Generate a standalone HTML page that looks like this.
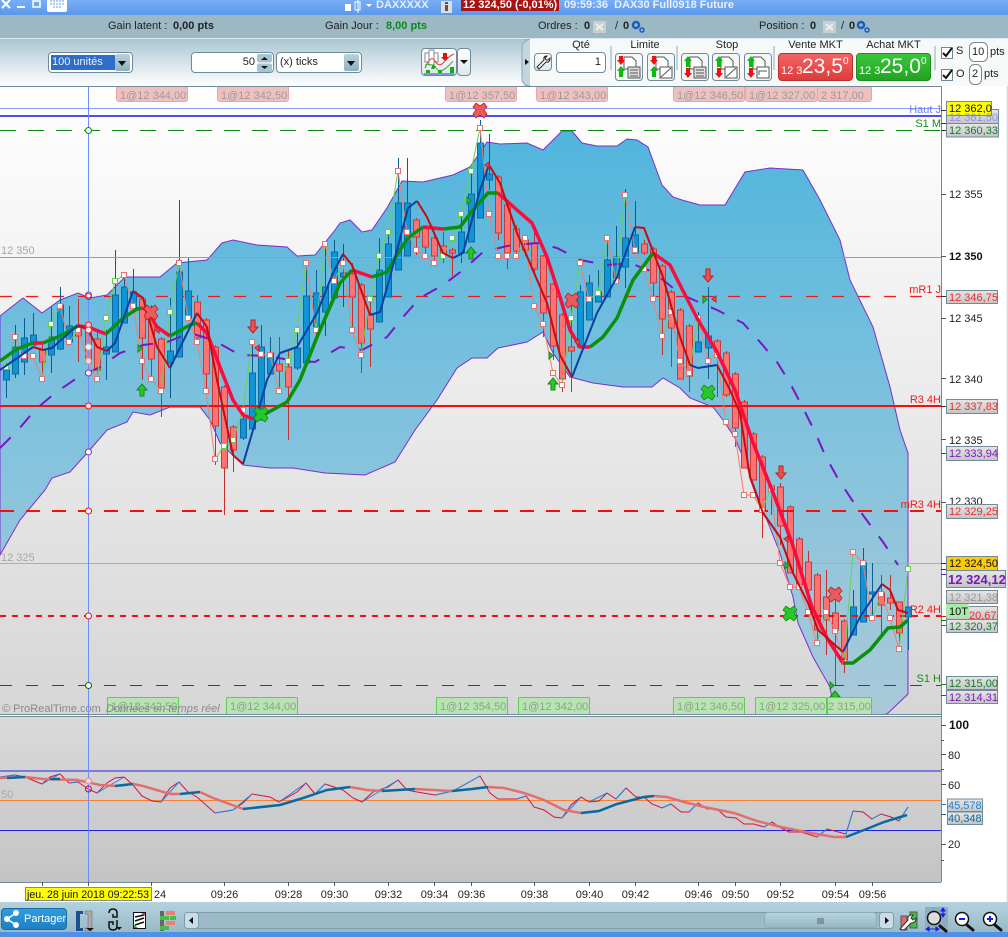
<!DOCTYPE html>
<html><head><meta charset="utf-8"><style>
html,body{margin:0;padding:0;background:#fff}
#p{position:relative;width:1008px;height:937px;overflow:hidden;font-family:"Liberation Sans",sans-serif;font-size:11px;color:#222}
.a{position:absolute;white-space:nowrap}
.sel{position:absolute;background:#fff;border:1px solid #6f8b9b;border-radius:4px;box-sizing:border-box}
.ar{position:absolute;top:1px;bottom:1px;width:15px;background:linear-gradient(#b9d2dc,#8fb0bf);border-radius:2px}
.ar:after{content:"";position:absolute;left:3px;top:7px;border:4px solid transparent;border-top:5px solid #111;border-bottom:0}
.btn{position:absolute;box-sizing:border-box;border:1px solid #6f8b9b;border-radius:4px;background:linear-gradient(#fff,#dfe7ea)}
.red,.grn{position:absolute;top:53px;height:28px;width:75px;border-radius:4px;box-sizing:border-box;color:#fff}
.red{left:778px;background:linear-gradient(#f26464,#dd3c3c);border:1px solid #b83232}
.grn{left:856px;background:linear-gradient(#3cc43c,#22a522);border:1px solid #1e8c1e}
.s{position:absolute;bottom:3px;font-size:11px}.b{position:absolute;top:0;font-size:21px;line-height:25px}.u{position:absolute;top:2px;font-size:10px}
svg text{font-family:"Liberation Sans",sans-serif}
</style></head><body><div id="p">
<!-- top bars -->
<div class="a" style="left:0;top:0;width:1008px;height:15px;background:linear-gradient(#77aef5,#5b97ea)"></div>
<div class="a" style="left:0;top:15px;width:1008px;height:23px;background:#9bb8c4"></div>
<div class="a" style="left:0;top:38px;width:1008px;height:1px;background:#dbe8ed"></div>
<div class="a" style="left:0;top:39px;width:1008px;height:47px;background:linear-gradient(#a9c5d1,#c4d8e0 30%,#fff)"></div>
<div class="a" style="left:525px;top:39px;width:483px;height:47px;background:#f7f9f9"></div>
<svg class="a" style="left:0;top:0" width="1008" height="86">
<g stroke="#fff" fill="none"><path d="M2 0L10 8M10 0L2 8" stroke-width="2"/><path d="M17 7h8" stroke-width="2"/><rect x="33" y="1" width="7" height="6" stroke-width="1.5"/></g>
<rect x="47" y="-4" width="20" height="16" rx="2" fill="#fff"/><path d="M50 1h14M50 4h14M53 7h9" stroke="#5b97ea" stroke-dasharray="2 1"/>
<path d="M349 5v6M358 0v13" stroke="#fff"/><rect x="345" y="4" width="6" height="7" fill="#fff"/><rect x="355" y="2" width="5" height="8" fill="none" stroke="#fff"/><path d="M366 4h6l-3 3z" fill="#fff"/>
<rect x="441" y="1" width="11" height="12" fill="#ddd"/><rect x="445" y="5" width="3" height="6" fill="#555"/><rect x="445" y="2" width="3" height="2" fill="#555"/>
<rect x="461" y="0" width="98" height="11" fill="#a81212"/>
<path d="M522 39q8 3 8 8v32q0 6 -8 7h8v-47z" fill="#9bb8c4"/><path d="M530 39q-8 3 -8 8v32q0 6 8 7" fill="#c2d6de" stroke="#8fa8b5"/><path d="M525 59l4 3l-4 3z" fill="#111"/>
<rect x="593" y="21" width="13" height="12" fill="#c9cfd1"/><rect x="824" y="21" width="13" height="12" fill="#c9cfd1" transform="translate(-1 0)"/><path d="M596 24l7 6M603 24l-7 6M826 24l7 6M833 24l-7 6" stroke="#eee" stroke-width="2"/>
<g fill="none" stroke="#1a5fc0" stroke-width="2.5"><circle cx="636" cy="25" r="3"/><circle cx="642" cy="30" r="2" stroke-width="1.5"/><circle cx="861" cy="25" r="3"/><circle cx="867" cy="30" r="2" stroke-width="1.5"/></g>
<path d="M611 46v24M677 46v24M774 46v24M935 46v24" stroke="#8fa8b5"/>
</svg>
<div class="a" style="left:463px;top:-1px;color:#fff;font-weight:bold">12 324,50 (-0,01%)</div>
<div class="a" style="left:376px;top:-1px;color:#e4edfb;font-weight:bold">DAXXXXX</div>
<div class="a" style="left:564px;top:-1px;color:#e8f0fc;font-weight:bold">09:59:36&nbsp; DAX30 Full0918 Future</div>
<div class="a" style="left:108px;top:20px">Gain latent :</div><div class="a" style="left:173px;top:20px;font-weight:bold">0,00 pts</div>
<div class="a" style="left:325px;top:20px">Gain Jour :</div><div class="a" style="left:386px;top:20px;font-weight:bold;color:#0b8a1c">8,00 pts</div>
<div class="a" style="left:538px;top:20px">Ordres :</div><div class="a" style="left:584px;top:20px;font-weight:bold">0</div><div class="a" style="left:615px;top:20px">/</div><div class="a" style="left:623px;top:20px;font-weight:bold">0</div>
<div class="a" style="left:759px;top:20px">Position :</div><div class="a" style="left:810px;top:20px;font-weight:bold">0</div><div class="a" style="left:841px;top:20px">/</div><div class="a" style="left:849px;top:20px;font-weight:bold">0</div>
<!-- toolbar -->
<div class="sel" style="left:48px;top:52px;width:85px;height:21px"><div class="a" style="left:2px;top:2px;height:15px;background:#2f6ec6;color:#e8f0ff;padding-left:1px;line-height:15px;width:63px">100 unités</div><div class="ar" style="right:2px"></div></div>
<div class="sel" style="left:191px;top:52px;width:83px;height:21px"><div class="a" style="right:18px;top:3px">50</div><svg class="a" style="left:65px;top:1px" width="16" height="18"><rect width="15" height="8.5" fill="#a8c4d0" rx="2"/><rect y="9.5" width="15" height="8.5" fill="#a8c4d0" rx="2"/><path d="M4 6l3.500-3l3.500 3zM4 12l3.500 3l3.500-3z" fill="#111"/></svg></div>
<div class="sel" style="left:276px;top:52px;width:86px;height:21px"><div class="a" style="left:3px;top:3px">(x) ticks</div><div class="ar" style="right:2px"></div></div>
<div class="btn" style="left:421px;top:48px;width:36px;height:28px"><svg width="34" height="26"><rect x="3" y="4" width="13" height="9" fill="#fff" stroke="#888"/><rect x="7" y="1" width="5" height="15" fill="#fff" stroke="#888"/><path d="M3 19q6-14 10-7t9 1t10-8" stroke="#e04040" fill="none"/><path d="M3 16q8-2 12 4t16-8" stroke="#3cb43c" fill="none"/><path d="M21 4h4v4h2l-4 4l-4-4h2z" fill="#e01010"/><path d="M12 20h-3l2-5l3 3z" fill="#18a818"/><path d="M4 21h4v3h-4zM16 21h4v3h-4zM28 18h4v6h-4z" fill="#10b010"/><path d="M2 25h30" stroke="#2040e0"/></svg></div>
<div class="btn" style="left:457px;top:48px;width:14px;height:28px"><svg width="12" height="26"><path d="M2 11h8l-4 4z" fill="#111"/></svg></div>
<div class="btn" style="left:534px;top:53px;width:18px;height:18px"><svg width="16" height="16"><path d="M2 13l7-7q-1-4 3-4l-2 2l1 2l2 0l2-2q0 5-4 4l-7 7z" fill="#fff" stroke="#222"/></svg></div>
<div class="sel" style="left:556px;top:52px;width:50px;height:21px;text-align:right"><div style="padding:3px 4px 0 0">1</div></div>
<div class="a" style="left:556px;top:39px;width:50px;text-align:center">Qté</div><div class="a" style="left:615px;top:39px;width:60px;text-align:center">Limite</div><div class="a" style="left:697px;top:39px;width:60px;text-align:center">Stop</div><div class="a" style="left:778px;top:39px;width:75px;text-align:center">Vente MKT</div><div class="a" style="left:856px;top:39px;width:75px;text-align:center">Achat MKT</div>
<svg class="a" style="left:0;top:0" width="1008" height="90">
<g fill="#f3f6f7" stroke="#6f8b9b"><rect x="615.500" y="53.500" width="27" height="27" rx="3"/><rect x="647.500" y="53.500" width="27" height="27" rx="3"/><rect x="681.500" y="53.500" width="27" height="27" rx="3"/><rect x="712.500" y="53.500" width="27" height="27" rx="3"/><rect x="744.500" y="53.500" width="27" height="27" rx="3"/></g>
<g fill="#fff" stroke="#555"><path d="M624 57h8l4 4v8h-12zM656 57h8l4 4v8h-12zM690 57h8l4 4v8h-12zM721 57h8l4 4v8h-12zM753 57h8l4 4v8h-12z"/><rect x="628" y="67" width="12" height="11" fill="#ddd"/><rect x="660" y="67" width="12" height="11"/><rect x="694" y="67" width="12" height="11" fill="#ddd"/><rect x="725" y="67" width="12" height="11"/><rect x="757" y="67" width="12" height="11"/></g>
<path d="M630 70h8M630 73h8M630 76h8M696 70h8M696 73h8M696 76h8" stroke="#555"/><path d="M661 77l10-9M726 77l10-9" stroke="#555"/><path d="M759 75v-4h8" stroke="#555" fill="none"/>
<g fill="#ee1111"><path d="M619 56h4v4h2l-4 5l-4-5h2zM652 56h4v4h2l-4 5l-4-5h2zM686 68h4v5h2l-4 5l-4-5h2zM717 68h4v5h2l-4 5l-4-5h2zM749 68h4v5h2l-4 5l-4-5h2z"/></g>
<g fill="#0fb80f"><path d="M621 66l4 5h-2v6h-4v-6h-2zM654 66l4 5h-2v6h-4v-6h-2zM688 56l4 5h-2v6h-4v-6h-2zM719 56l4 5h-2v6h-4v-6h-2zM751 56l4 5h-2v6h-4v-6h-2z"/></g>
<g fill="#fff" stroke="#6f8b9b"><rect x="941.500" y="47.500" width="11" height="11"/><rect x="941.500" y="69.500" width="11" height="11"/><rect x="969.500" y="42.500" width="18" height="19" rx="5"/><rect x="969.500" y="64.500" width="12" height="20" rx="5"/></g>
<path d="M943 53l3 3l6-8M943 75l3 3l6-8" stroke="#111" stroke-width="2" fill="none"/>
</svg>
<div class="red"><span class="s" style="left:2px">12 3</span><span class="b" style="left:23px">23,5</span><span class="u" style="left:64px">0</span></div>
<div class="grn"><span class="s" style="left:2px">12 3</span><span class="b" style="left:23px">25,0</span><span class="u" style="left:64px">0</span></div>
<div class="a" style="left:956px;top:45px">S</div><div class="a" style="left:972px;top:46px">10</div><div class="a" style="left:990px;top:46px">pts</div>
<div class="a" style="left:956px;top:68px">O</div><div class="a" style="left:972px;top:68px">2</div><div class="a" style="left:984px;top:68px">pts</div>

<!-- chart -->
<svg class="a" style="left:0;top:86px" width="1008" height="816" viewBox="0 86 1008 816">
<defs>
<linearGradient id="bg" x1="0" y1="0" x2="0" y2="1"><stop offset="0" stop-color="#fff"/><stop offset="1" stop-color="#d6d6d6"/></linearGradient>
<linearGradient id="cl" gradientUnits="userSpaceOnUse" x1="0" y1="130" x2="0" y2="714"><stop offset="0" stop-color="#50b5dc"/><stop offset=".5" stop-color="#80c2de"/><stop offset="1" stop-color="#aac9d8"/></linearGradient>
<linearGradient id="rs" x1="0" y1="0" x2="0" y2="1"><stop offset="0" stop-color="#dadada"/><stop offset="1" stop-color="#c4c4c4"/></linearGradient>
<linearGradient id="tg" x1="0" y1="0" x2="0" y2="1"><stop offset="0" stop-color="#e6e6e6"/><stop offset="1" stop-color="#c4c4c4"/></linearGradient>
<clipPath id="cc"><rect x="0" y="86" width="941" height="628"/></clipPath>
<marker id="mg" markerWidth="6" markerHeight="6" refX="3" refY="3" markerUnits="userSpaceOnUse"><rect x=".5" y=".5" width="5" height="5" fill="#fff" stroke="#5cd04c"/></marker>
<marker id="mr" markerWidth="6" markerHeight="6" refX="3" refY="3" markerUnits="userSpaceOnUse"><rect x=".5" y=".5" width="5" height="5" fill="#fff" stroke="#e87070"/></marker>
</defs>
<rect x="0" y="86" width="941" height="628" fill="url(#bg)"/>
<rect x="941" y="86" width="67" height="816" fill="#fff"/>
<rect x="0" y="717" width="941" height="165" fill="url(#rs)"/>
<rect x="1006.500" y="86" width="1.500" height="816" fill="#d6dcdf"/>
<g clip-path="url(#cc)">
<polygon fill="url(#cl)" stroke="#7a2fc8" stroke-width="1" points="0,316 23,298 42,313 60,300 78,293 90,298 107,295 125,277 160,277 177,263 207,260 222,243 233,240 257,245 287,247 297,256 315,255 335,230 340,223 350,220 362,232 372,230 387,208 402,181 423,182 453,175 470,167 487,142 500,144 527,143 543,150 562,131 572,131 582,143 597,146 617,146 627,139 637,140 648,147 662,185 673,197 682,200 700,205 725,205 745,172 770,168 803,170 820,200 840,240 850,280 873,327 890,387 900,430 908,453 908,694 887,714 836,722 830,687 813,657 798,623 793,597 780,553 763,510 747,467 735,438 723,420 713,407 690,398 680,388 663,378 652,387 623,387 593,383 570,377 553,353 543,332 527,342 498,348 487,358 472,358 457,368 437,400 415,430 395,462 365,475 325,473 293,468 270,468 243,465 220,443 210,420 200,407 170,407 150,415 133,412 127,422 107,430 88,452 70,472 52,478 45,490 20,520 0,555"/>
<!-- horizontals -->
<g fill="none">
<path d="M0 108.500H941" stroke="#8c9cff"/>
<path d="M0 116H941" stroke="#5050e8" stroke-width="2"/>
<path d="M0 130.500H941" stroke="#0a8a0a" stroke-dasharray="16 12"/>
<path d="M0 296.500H941" stroke="#f01818" stroke-width="1.300" stroke-dasharray="12 14"/>
<path d="M0 563.500H941" stroke="#e89a70"/>
<path d="M0 685.500H941" stroke="#0a6a0a" stroke-dasharray="12 14"/>
<!-- wicks -->
<path stroke="#0b5c90" d="M6.500 363V398M15.500 325V378M24.500 318V375M33.500 313V345M51.500 307V373M60.500 287V350M69.500 306V343M106.500 330V380M115.500 250V352M124.500 273V323M133.500 269V307M170.500 298V398M179.500 200V357M188.500 258V320M243.500 410V440M252.500 340V429M261.500 325V420M270.500 337V374M297.500 330V370M306.500 263V363M316.500 270V340M325.500 243V336M334.500 240V300M343.500 244V307M379.500 238V322M388.500 232V297M398.500 158V270M407.500 158V256M461.500 214V263M471.500 171V242M480.500 120V218M489.500 134V190M580.500 285V347M589.500 275V320M598.500 270V302M607.500 238V297M616.500 226V279M625.500 189V288M635.500 201V253M698.500 312V352M708.500 287V379M853.500 590V635M863.500 548V622M872.500 563V617M908.500 608V650"/>
<path stroke="#c33030" d="M42.500 343V380M78.500 299V362M88.500 320V370M97.500 330V377M142.500 297V380M151.500 305V377M161.500 337V417M197.500 295V345M206.500 318V393M215.500 345V465M224.500 385V515M233.500 425V472M279.500 337V392M288.500 350V440M352.500 263V330M361.500 283V373M370.500 300V367M416.500 218V255M425.500 227V256M434.500 235V263M443.500 232V263M452.500 248V276M498.500 175V240M507.500 203V269M516.500 225V253M525.500 235V256M534.500 227V275M543.500 255V337M553.500 283V360M562.500 313V392M571.500 306V392M644.500 240V255M653.500 247V300M662.500 264V355M671.500 290V367M680.500 308V379M689.500 324V392M717.500 339V397M726.500 351V397M735.500 372V447M744.500 400V468M753.500 432V480M762.500 455V538M771.500 484V515M780.500 483V545M790.500 505V573M799.500 537V585M808.500 551V600M817.500 573V645M826.500 570V655M835.500 600V685M844.500 619V673M881.500 575V637M890.500 575V610M899.500 602V650"/>
<!-- bodies -->
<path fill="#0f95d6" stroke="#0b6aa0" d="M3.500 370h6v10h-6zM12.500 347h6v27h-6zM21.500 338h6v24h-6zM30.500 335h6v10h-6zM48.500 337h6v18h-6zM57.500 305h6v44h-6zM66.500 326h6v16h-6zM103.500 347h6v7h-6zM112.500 295h6v57h-6zM121.500 287h6v36h-6zM130.500 292h6v15h-6zM167.500 351h6v12h-6zM176.500 272h6v85h-6zM185.500 291h6v27h-6zM240.500 419h6v19h-6zM249.500 373h6v56h-6zM258.500 347h6v73h-6zM267.500 353h6v21h-6zM294.500 348h6v20h-6zM303.500 296h6v67h-6zM313.500 293h6v37h-6zM322.500 287h6v25h-6zM331.500 252h6v46h-6zM340.500 273h6v4h-6zM376.500 270h6v52h-6zM385.500 244h6v53h-6zM395.500 203h6v67h-6zM404.500 203h6v53h-6zM458.500 232h6v21h-6zM468.500 194h6v48h-6zM477.500 143h6v75h-6zM486.500 174h6v6h-6zM577.500 292h6v55h-6zM586.500 283h6v37h-6zM595.500 292h6v10h-6zM604.500 260h6v37h-6zM613.500 257h6v22h-6zM622.500 238h6v29h-6zM632.500 235h6v18h-6zM695.500 342h6v10h-6zM705.500 336h6v12h-6zM850.500 607h6v28h-6zM860.500 563h6v59h-6zM869.500 592h6v2h-6zM905.500 607h6v10h-6z"/>
<path fill="#ff7272" stroke="#c83a3a" d="M39.500 350h6v12h-6zM75.500 328h6v8h-6zM85.500 330h6v33h-6zM94.500 339h6v31h-6zM139.500 299h6v39h-6zM148.500 312h6v47h-6zM158.500 339h6v49h-6zM194.500 302h6v36h-6zM203.500 320h6v54h-6zM212.500 347h6v79h-6zM221.500 387h6v81h-6zM230.500 427h6v23h-6zM276.500 364h6v7h-6zM285.500 367h6v20h-6zM349.500 274h6v23h-6zM358.500 285h6v58h-6zM367.500 315h6v14h-6zM413.500 220h6v17h-6zM422.500 228h6v19h-6zM431.500 238h6v18h-6zM440.500 246h6v8h-6zM449.500 250h6v3h-6zM495.500 177h6v56h-6zM504.500 205h6v48h-6zM513.500 229h6v22h-6zM522.500 240h6v10h-6zM531.500 243h6v26h-6zM540.500 256h6v57h-6zM550.500 284h6v62h-6zM559.500 315h6v64h-6zM568.500 347h6v4h-6zM641.500 244h6v9h-6zM650.500 249h6v34h-6zM659.500 266h6v53h-6zM668.500 292h6v36h-6zM677.500 310h6v69h-6zM686.500 326h6v50h-6zM714.500 341h6v15h-6zM723.500 353h6v42h-6zM732.500 374h6v54h-6zM741.500 402h6v66h-6zM750.500 434h6v46h-6zM759.500 457h6v54h-6zM768.500 486h6v4h-6zM777.500 487h6v39h-6zM787.500 507h6v66h-6zM796.500 539h6v46h-6zM805.500 562h6v28h-6zM814.500 575h6v55h-6zM823.500 597h6v23h-6zM832.500 613h6v17h-6zM841.500 621h6v39h-6zM878.500 593h6v12h-6zM887.500 598h6v5h-6zM896.500 602h6v31h-6z"/>
<path d="M0 257.500H941" stroke="#ff7f30"/>
<path d="M0 406H941" stroke="#f40f0f" stroke-width="2"/>
<path d="M0 511H941" stroke="#f01010" stroke-width="2" stroke-dasharray="14 12"/>
<path d="M0 616H941" stroke="#f01010" stroke-width="2" stroke-dasharray="6 6"/>
<!-- long MA -->
<polyline stroke="#7a18c0" stroke-width="2" stroke-dasharray="15 14" points="0,448 18,430 35,410 55,393 77,378 100,367 120,353 143,345 167,342 190,333 213,340 240,355 267,356 290,360 315,362 340,347 362,350 387,337 403,317 420,298 443,285 463,270 483,252 507,246 537,243 557,248 580,260 607,265 630,263 653,272 673,288 687,297 717,310 743,323 760,342 777,362 790,383 803,408 815,432 825,455 837,477 852,500 868,522 883,542 898,565"/>
<!-- close lines -->
<g stroke-width="1" style="marker:url(#mg)" stroke="#66d258">
<polyline points="6,367 15,337"/><polyline points="42,379 51,324 60,306"/><polyline points="69,342 78,330"/><polyline points="97,379 106,318 115,281 124,275"/><polyline points="161,391 170,312 179,263"/><polyline points="215,459 224,446 233,440 243,410 252,342"/><polyline points="279,391 288,361 297,330 306,263"/><polyline points="316,330 325,244"/><polyline points="334,281 343,263"/><polyline points="361,355 370,299 379,256 388,232 398,171"/><polyline points="434,263 443,256 452,238 461,214 471,171 480,128"/><polyline points="516,256 525,238"/><polyline points="562,385 571,318 580,263"/><polyline points="589,299 598,293 607,238"/><polyline points="616,281 625,195"/><polyline points="662,336 671,312"/><polyline points="689,373 698,318"/><polyline points="708,361 717,355"/><polyline points="762,510 771,489"/><polyline points="817,643 826,612"/><polyline points="844,662 853,552"/><polyline points="872,618 881,594"/><polyline points="899,649 908,569"/>
</g>
<g stroke-width="1" style="marker:url(#mr)" stroke="#ec8070">
<polyline points="15,337 24,356 33,356 42,379"/><polyline points="60,306 69,342"/><polyline points="78,330 88,361 97,379"/><polyline points="124,275 133,306 142,361 151,379 161,391"/><polyline points="179,263 188,318 197,342 206,391 215,459"/><polyline points="252,342 261,354 270,355 279,391"/><polyline points="306,263 316,330"/><polyline points="325,244 334,281"/><polyline points="343,263 352,330 361,355"/><polyline points="398,171 407,232 416,250 425,256 434,263"/><polyline points="480,128 489,214 498,256 507,256 516,256"/><polyline points="525,238 534,306 543,324 553,373 562,385"/><polyline points="580,263 589,299"/><polyline points="607,238 616,281"/><polyline points="625,195 635,250 644,269 653,299 662,336"/><polyline points="671,312 680,361 689,373"/><polyline points="698,318 708,361"/><polyline points="717,355 726,422 735,434 744,495 753,495 762,510"/><polyline points="771,489 780,563 790,587 799,587 808,612 817,643"/><polyline points="826,612 835,631 844,662"/><polyline points="853,552 863,563 872,618"/><polyline points="881,594 890,618 899,649"/>
</g>
<!-- thick EMA -->
<g stroke-width="3.500" stroke-linejoin="round">
<path stroke="#ff0a3c" d="M33 343L43 343M78 326L88 327L106 334M142 308L147 310L157 327L170 336M197 323L207 333L220 367L233 400L243 415L253 419M352 270L372 277M423 227L443 229M498 193L517 210L532 223L547 257L560 297L570 330L580 347L590 347M653 253L670 265L680 285L697 318L717 352L735 390L752 440L772 490L792 543L812 607L827 638L843 663"/>
<path stroke="#0a900a" d="M0 361L17 349L33 343M43 343L60 336L78 326M106 334L123 318L137 309L142 308M170 336L190 325L197 323M253 419L267 413L287 402L300 380L317 337L333 300L340 283L352 270M372 277L387 272L398 253L408 238L423 227M443 229L460 227L473 210L488 193L498 193M590 347L603 337L617 318L633 280L653 253M843 663L853 663L870 650L888 628L900 627L908 620"/>
</g>
<!-- short MA -->
<g stroke-width="2" stroke-linejoin="round">
<path stroke="#0a40a0" d="M0 370L33 347M43 350L52 348L78 325M107 351L115 343L133 291M170 368L197 313M243 464L253 430L267 380L280 353L297 347L317 313L333 273L343 254M370 315L380 312L390 277L408 208L417 201M453 258L463 253L480 190L489 165M572 377L597 313L617 277L635 227M690 365L698 368L717 365M843 652L860 617L882 584"/>
<path stroke="#c40d10" d="M33 347L43 350M78 325L88 330L97 347L107 351M133 291L143 298L157 347L170 368M197 313L207 327L217 380L233 455L243 464M343 254L352 265L370 315M417 201L427 217L443 253L453 258M489 165L500 183L517 233L547 303L560 355L572 377M635 227L644 228L663 277L680 337L690 365M717 365L730 390L740 413L750 477L763 513L780 537L793 573L808 603L818 630L843 652M882 584L890 590L898 610L908 613"/>
</g>
</g>
</g>
<!-- arrows / signals -->
<g fill="#28c828" stroke="#128a12"><path d="M142 384l5 6h-3v6h-4v-6h-3zM471 247l5 6h-3v6h-4v-6h-3zM553 378l5 6h-3v6h-4v-6h-3zM835 691l5 6h-3v2h-4v-2h-3z"/>
<path d="M138 345l4 3.500l-4 3.500zM467 197l4 3.500l-4 3.500zM549 352l4 3.500l-4 3.500zM703 296l4 3.500l-4 3.500zM785 562l4 3.500l-4 3.500zM830 682l4 3.500l-4 3.500z"/>
<path d="M254 411l3-4l4 3l4-3l3 4l-3 3l3 4l-3 4l-4-3l-4 3l-3-4l3-4zM701 389l3-4l4 3l4-3l3 4l-3 3l3 4l-3 4l-4-3l-4 3l-3-4l3-4zM783 610l3-4l4 3l4-3l3 4l-3 3l3 4l-3 4l-4-3l-4 3l-3-4l3-4z" stroke-width=".8"/></g>
<g fill="#f05050" stroke="#c02020"><path d="M251 320h4v7h3l-5 6l-5-6h3zM706 269h4v7h3l-5 6l-5-6h3zM779 466h4v7h3l-5 6l-5-6h3z"/>
<path d="M159 327l-4 3l4 3zM259 345l-4 3l4 3zM489 162l-4 3l4 3zM579 339l-4 3l4 3zM716 296l-4 3l4 3zM788 536l-4 3l4 3zM844 658l-4 3l4 3z"/>
<path d="M144 309l3-4l4 3l4-3l3 4l-3 3l3 4l-3 4l-4-3l-4 3l-3-4l3-4zM565 297l3-4l4 3l4-3l3 4l-3 3l3 4l-3 4l-4-3l-4 3l-3-4l3-4zM828 591l3-4l4 3l4-3l3 4l-3 3l3 4l-3 4l-4-3l-4 3l-3-4l3-4zM473 107l3-4l4 3l4-3l3 4l-3 3l3 4l-3 4l-4-3l-4 3l-3-4l3-4z" stroke-width=".8" fill="#e85c5c"/></g>
<!-- order pills -->
<g font-size="11"><g fill="#f0c0c0" stroke="#eaa6a6"><rect x="116.500" y="84.500" width="71" height="17" rx="2.500"/><rect x="217.500" y="84.500" width="71" height="17" rx="2.500"/><rect x="445.500" y="84.500" width="71" height="17" rx="2.500"/><rect x="536.500" y="84.500" width="71" height="17" rx="2.500"/><rect x="673.500" y="84.500" width="71" height="17" rx="2.500"/><rect x="817.500" y="84.500" width="54" height="17" rx="2.500"/><rect x="745.500" y="84.500" width="72" height="17" rx="2.500"/></g>
<g fill="#9a9a9a"><text x="120" y="99">1@12 344,00</text><text x="221" y="99">1@12 342,50</text><text x="449" y="99">1@12 357,50</text><text x="540" y="99">1@12 343,00</text><text x="677" y="99">1@12 346,50</text><text x="749" y="99">1@12 327,00</text><text x="821" y="99">2 317,00</text></g>
<g fill="#b8e4b4" stroke="#58d050"><path d="M107.500 714.500v-16q0-1 1-1h69q1 0 1 1v16zM226.500 714.500v-16q0-1 1-1h69q1 0 1 1v16zM436.500 714.500v-16q0-1 1-1h69q1 0 1 1v16zM518.500 714.500v-16q0-1 1-1h69q1 0 1 1v16zM673.500 714.500v-16q0-1 1-1h69q1 0 1 1v16zM827.500 714.500v-16q0-1 1-1h42q1 0 1 1v16zM755.500 714.500v-16q0-1 1-1h69q1 0 1 1v16z"/></g>
<g fill="#8f9f8c"><text x="111" y="710">1@12 342,50</text><text x="230" y="710">1@12 344,00</text><text x="440" y="710">1@12 354,50</text><text x="522" y="710">1@12 342,00</text><text x="677" y="710">1@12 346,50</text><text x="759" y="710">1@12 325,00</text><text x="828" y="710">2 315,00</text></g>
<g fill="#8a8a8a"><text x="2" y="712">© ProRealTime.com</text><text x="106" y="712" font-style="italic">Données en temps réel</text></g>
<text x="1" y="254" fill="#a8a8a8">12 350</text><text x="1" y="561" fill="#a8a8a8">12 325</text><text x="1" y="798" fill="#a8a8a8">50</text></g>
<!-- line labels -->
<g font-size="11" text-anchor="end"><text x="941" y="113" fill="#7080f8">Haut J</text><text x="941" y="127" fill="#119211">S1 M</text><text x="941" y="293" fill="#f01818">mR1 J</text><text x="941" y="403" fill="#f01818">R3 4H</text><text x="941" y="508" fill="#f01818">mR3 4H</text><text x="941" y="613" fill="#f01818">R2 4H</text><text x="941" y="682" fill="#119211">S1 H</text></g>
<!-- rsi -->
<g fill="none"><path d="M0 771H941M0 830.500H941" stroke="#2020e8"/><path d="M0 800.500H941" stroke="#ff7f30"/>
<path stroke="#d81040" d="M0 777L15 775L25 777L42 784L50 777L60 774L69 783L78 782L88 789L97 793L107 783L115 778L124 777L133 785L142 796L152 801L161 802L170 788L179 782L188 792L197 797L206 805L215 813L233 810L243 803L252 794L270 797L279 802L297 792L306 783L315 794L325 784L343 790L353 798L362 802L373 792L388 787L398 780L407 790L417 792L435 795L453 791L480 776L490 793L498 799L517 799L526 796L534 807L544 810L554 817L562 818L571 805L581 797L589 802L599 801L607 793L616 799L626 788L636 797L644 797L652 804L662 808L671 804L681 812L689 812L698 803L707 809L717 809L726 817L736 818L744 824L754 824L764 827L772 822L781 828L789 832L801 832L817 837L827 829L846 834L853 811L863 812L872 819L881 814L891 817L899 821L908 807"/>
<path stroke="#2084e0" d="M0 777L15 775M42 784L60 774M69 783L78 782M97 793L124 777M161 802L179 782M215 813L233 810L252 794M279 802L306 783M315 794L325 784M362 802L398 780M435 795L453 791L480 776M517 799L526 796M562 818L581 797M589 802L607 793M616 799L626 788M662 808L671 804M689 812L698 803M764 827L772 822M817 837L827 829M846 834L853 811M872 819L881 814M899 821L908 807"/>
<path stroke="#e07070" stroke-width="2.500" d="M0 778L25 777L43 779L77 780L100 785L115 786M133 784L143 786L170 794L180 794M200 792L213 798L243 809M350 787L367 790L382 791M415 789L433 790L452 791M488 787L504 788L524 793L544 800L564 810L581 813M654 796L667 797L684 802L704 807L734 813L757 821L781 827L811 833L834 837L846 837"/>
<path stroke="#0a6aa0" stroke-width="2.500" d="M7 778L25 777M50 779L60 779M115 786L133 784M180 794L200 792M243 809L280 805L300 799L327 790L350 787M382 791L415 789M452 791L472 789L488 787M581 813L599 811L617 804L644 797L654 796M846 837L864 830L884 822L907 815"/></g>
<!-- crosshair -->
<path d="M88.500 86V882" stroke="#6d8dff"/>
<g stroke-width="1"><circle cx="88.500" cy="130.500" r="3" fill="#fff" stroke="#0a8a0a"/><circle cx="88.500" cy="295" r="3" fill="#fff" stroke="#8030c8"/><circle cx="88.500" cy="296.500" r="3" fill="none" stroke="#f01818"/><circle cx="88.500" cy="325" r="3" fill="#f8c8c8" stroke="#ff1040"/><circle cx="88.500" cy="330" r="3" fill="#fbeaea" stroke="#e04040"/><circle cx="88.500" cy="347" r="3" fill="#eee" stroke="#bbb"/><circle cx="88.500" cy="361" r="3" fill="#f4d8d0" stroke="#e09080"/><circle cx="88.500" cy="373" r="3" fill="#fff" stroke="#8030c8"/><circle cx="88.500" cy="406" r="3" fill="#fbdcdc" stroke="#f01818"/><circle cx="88.500" cy="452" r="3" fill="#fff" stroke="#8030c8"/><circle cx="88.500" cy="511" r="3" fill="#fff" stroke="#f01010"/><circle cx="88.500" cy="616" r="3" fill="#fff" stroke="#f01010"/><circle cx="88.500" cy="685.500" r="3" fill="#fff" stroke="#0a6a0a"/><circle cx="88.500" cy="781" r="3" fill="#e8d8d8" stroke="#e09090"/><circle cx="88.500" cy="789" r="3" fill="none" stroke="#c01040"/></g>
<!-- frame -->
<path d="M0 86.500H941M941.500 86V882M0 714.500H941M0 716.500H941M0 882.500H941" stroke="#708a98" fill="none"/>
<!-- axis ticks -->
<path stroke="#555" d="M941 194.500h5M941 256.500h5M941 318.500h5M941 378.500h5M941 439.500h5M941 502.500h5M941 725.500h5M941 740.500h3M941 754.500h5M941 769.500h3M941 784.500h5M941 814.500h3M941 844.500h5M941 860.500h3M42.500 882v4M88.500 882v4M151.500 882v4M224.500 882v4M288.500 882v4M334.500 882v4M388.500 882v4M434.500 882v4M471.500 882v4M534.500 882v4M589.500 882v4M635.500 882v4M698.500 882v4M735.500 882v4M780.500 882v4M835.500 882v4M872.500 882v4" fill="none"/>
<g font-size="11" fill="#222" text-anchor="start"><text x="949" y="198">12 355</text><text x="949" y="260" font-weight="bold" fill="#111">12 350</text><text x="949" y="322">12 345</text><text x="949" y="383">12 340</text><text x="949" y="444">12 335</text><text x="949" y="505">12 330</text>
<text x="949" y="729" font-weight="bold" font-size="12" fill="#111">100</text><text x="948" y="759">80</text><text x="948" y="789">60</text><text x="948" y="848">20</text></g>
<g font-size="11" fill="#222" text-anchor="middle"><text x="160" y="898">24</text><text x="224.500" y="898">09:26</text><text x="288.500" y="898">09:28</text><text x="334.500" y="898">09:30</text><text x="388.500" y="898">09:32</text><text x="434.500" y="898">09:34</text><text x="471.500" y="898">09:36</text><text x="534.500" y="898">09:38</text><text x="589.500" y="898">09:40</text><text x="635.500" y="898">09:42</text><text x="698.500" y="898">09:46</text><text x="735.500" y="898">09:50</text><text x="780.500" y="898">09:52</text><text x="835.500" y="898">09:54</text><text x="872.500" y="898">09:56</text></g>
<rect x="25.500" y="887.500" width="126" height="13" fill="#ffff00" stroke="#888"/><text x="27" y="898" font-size="11" fill="#111" textLength="122" lengthAdjust="spacingAndGlyphs">jeu. 28 juin 2018 09:22:53</text>
<!-- price tags -->
<g stroke="#708a98" fill="url(#tg)"><rect x="946.500" y="109.500" width="52" height="14"/><rect x="946.500" y="123.500" width="52" height="13.500"/><rect x="946.500" y="290.500" width="51" height="13"/><rect x="946.500" y="399.500" width="51" height="14"/><rect x="946.500" y="446.500" width="51" height="14"/><rect x="946.500" y="504.500" width="51" height="14"/><rect x="946.500" y="590.500" width="51" height="13"/><rect x="946.500" y="606.500" width="51" height="13"/><rect x="946.500" y="619.500" width="51" height="13"/><rect x="946.500" y="676.500" width="51" height="13"/><rect x="946.500" y="690.500" width="51" height="13"/><rect x="946.500" y="570.500" width="59" height="17"/><rect x="947.500" y="799" width="35" height="12.500"/><rect x="947.500" y="812" width="35" height="12.500"/></g>
<rect x="946.500" y="101.500" width="45" height="14" fill="#ffff00" stroke="#708a98"/>
<rect x="946.500" y="556.500" width="51" height="14" fill="#fdcb00" stroke="#708a98"/>
<g stroke="#333"><path d="M941 110.500h5M941 123.500h5M941 130.500h5M941 296.500h5M941 406.500h5M941 563.500h5M941 569.500h5"/></g><path d="M941 453.500h5M941 574.500h5" stroke="#7a18c0"/><path d="M941 616.500h5" stroke="#f01010"/><path d="M941 620.500h5M941 625.500h5M941 684.500h5" stroke="#0a8a0a"/><path d="M941 695.500h5" stroke="#7a18c0"/><path d="M941 804.500h5" stroke="#2080d8"/><path d="M941 814.500h5" stroke="#0a6aa0"/>
<rect x="946" y="604" width="23" height="14" rx="2" fill="#a8e8a8"/>
<g font-size="11"><text x="949" y="121" fill="#9090f0">12 361,50</text><text x="949" y="112" fill="#111">12 362,0</text><text x="949" y="134" fill="#147a2a">12 360,33</text><text x="949" y="301" fill="#e83030">12 346,75</text><text x="949" y="410" fill="#e83030">12 337,83</text><text x="949" y="457" fill="#7a18c0">12 333,94</text><text x="949" y="515" fill="#e83030">12 329,25</text><text x="949" y="567" fill="#111">12 324,50</text><text x="948" y="584" fill="#7a18c0" font-weight="bold" font-size="13">12 324,12</text><text x="949" y="601" fill="#999">12 321,38</text><text x="969" y="619" fill="#e83030">20,67</text><text x="949" y="615" fill="#111">10T</text><text x="949" y="630" fill="#147a2a">12 320,37</text><text x="949" y="687" fill="#147a2a">12 315,00</text><text x="949" y="701" fill="#7a18c0">12 314,31</text><text x="948" y="809" fill="#2080d8">45,578</text><text x="948" y="822" fill="#0a6aa0">40,348</text></g>
</svg>
<!-- bottom toolbar -->
<div class="a" style="left:0;top:902px;width:1008px;height:30px;background:linear-gradient(#b4d2de,#99b9c7)"></div>
<div class="a" style="left:0;top:932px;width:1008px;height:5px;background:#4e92e8"></div>
<div class="a" style="left:1px;top:908px;width:66px;height:22px;background:linear-gradient(#2f9ce0,#1f7fc4);border:1px solid #1a6ca8;border-radius:4px;box-sizing:border-box;color:#fff;line-height:21px;padding-left:22px">Partager</div>
<div class="a" style="left:184px;top:912px;width:709px;height:17px;border:1px solid #7f9cab;border-radius:4px;box-sizing:border-box;background:#9cbac8"></div>
<div class="a" style="left:764px;top:912px;width:113px;height:16px;border:1px solid #8eacba;border-radius:4px;box-sizing:border-box;background:linear-gradient(#b6d2dd,#98b8c6)"></div>
<svg class="a" style="left:0;top:902px" width="1008" height="32">
<g fill="#fff" stroke="#fff"><circle cx="7" cy="17" r="2.500"/><circle cx="16" cy="11" r="2.500"/><circle cx="16" cy="23" r="2.500"/><path d="M7 17L16 11M7 17L16 23" stroke-width="1.500"/></g>
<path d="M83 9h-7v20h7v-3h-3v-14h3z" fill="#1a4f90"/><path d="M85 9h7v20h-7v-3h3v-14h-3z" fill="#aaa" stroke="#666" stroke-width=".5"/><path d="M86 26h8l-4 3z" fill="#111"/>
<g fill="none" stroke="#111" stroke-width="1.500"><path d="M109 13q0-4 4-4t4 4v4h-4v-3M117 20v6q0 4-4 4t-4-4v-4h4v3" transform="translate(0 -2)"/></g><path d="M116 25h6l-3 3z" fill="#111"/>
<rect x="133.500" y="10.500" width="12" height="16" fill="#fff" stroke="#111"/><path d="M135 15l9-2M135 19l9-3M135 23l9-3" stroke="#111" stroke-width="1.500"/><path d="M141 11h4v3z" fill="#e04040"/><path d="M134 26v-3l4 3z" fill="#18a818"/>
<g fill="#e88080"><rect x="160" y="9" width="4" height="20" fill="#666"/><rect x="166" y="9" width="9" height="4"/><rect x="166" y="19" width="9" height="4"/></g><g fill="#44c044"><rect x="160" y="14" width="9" height="4"/><rect x="160" y="24" width="9" height="4"/><rect x="170" y="14" width="6" height="4"/></g>
<rect x="184.500" y="10.500" width="14" height="16" rx="3" fill="#c8dde5" stroke="#7f9cab"/><path d="M193 15v7l-4-3.500z" fill="#111"/>
<rect x="879.500" y="10.500" width="14" height="16" rx="3" fill="#c8dde5" stroke="#7f9cab"/><path d="M885 15v7l4-3.500z" fill="#111"/>
<path d="M817 17h7M817 19h7M817 21h7" stroke="#567"/>
<rect x="901" y="14" width="6" height="14" fill="#e06868" stroke="#555"/><rect x="910" y="10" width="7" height="16" fill="#40c040" stroke="#555"/><path d="M900 27l8-9q-1-4 3-5l2 0l-2 3l2 2l3-2q0 5-5 5l-7 7z" fill="#fff" stroke="#333"/>
<rect x="925" y="5" width="23" height="25" fill="#8fadbb"/>
<g stroke="#111" fill="none" stroke-linecap="round"><path d="M940 24l6 5" stroke-width="3"/><path d="M967 23l6 5" stroke-width="3"/><path d="M995 23l6 5" stroke-width="3"/></g>
<circle cx="934" cy="16" r="6.500" fill="#ddd" stroke="#111" stroke-width="1.500"/>
<circle cx="962" cy="17" r="6.500" fill="#fff" stroke="#111" stroke-width="1.500"/><path d="M959 17h6" stroke="#1020e0" stroke-width="2"/>
<circle cx="990" cy="17" r="6.500" fill="#fff" stroke="#111" stroke-width="1.500"/><path d="M987 17h6M990 14v6" stroke="#1020e0" stroke-width="2"/>
<path d="M943 6v9M929 27h7M926 27l3-2v4zM939 27l-3-2v4zM943 6l-2 3h4zM943 15l-2-3h4z" stroke="#0a20f0" fill="#0a20f0"/>
</svg>
</div></body></html>
